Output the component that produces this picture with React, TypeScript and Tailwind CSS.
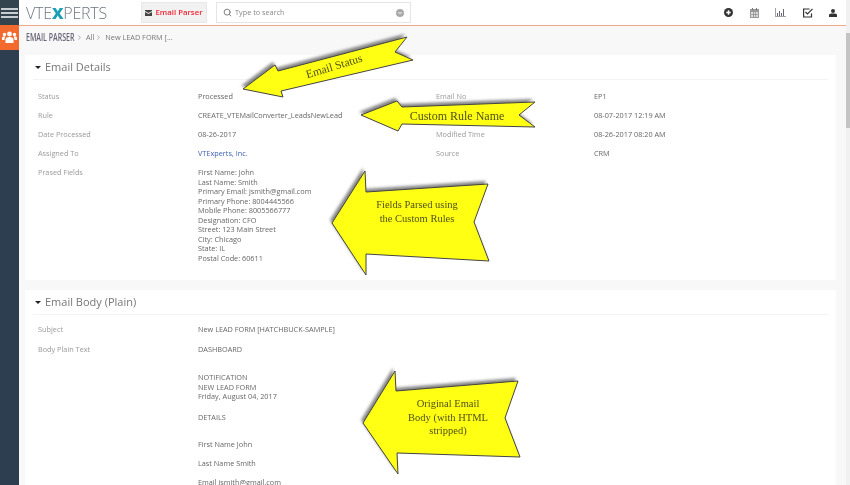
import { ChevronRight, ChevronDown, Search } from "lucide-react";

const font = "[font-family:'Open_Sans',sans-serif]";

function Row({ a, b, c, d, blue }: { a: string; b: string; c?: string; d?: string; blue?: boolean }) {
  return (
    <div className="flex h-[19px] items-start text-[7.3px] leading-[12px]">
      <div className="w-[160px] text-[#999]">{a}</div>
      <div className={`w-[238px] ${blue ? "text-[#4060b0]" : "text-[#666]"}`}>{b}</div>
      <div className="w-[158px] text-[#999]">{c}</div>
      <div className="text-[#666]">{d}</div>
    </div>
  );
}

function Title({ children }: { children: string }) {
  return (
    <div className="flex h-[25px] items-center gap-[4px] border-b border-[#f3f3f3] pl-[2px] text-[11px] text-[#777]">
      <span className="h-0 w-0 border-x-[3px] border-t-[3px] border-x-transparent border-t-[#222]" />
      {children}
    </div>
  );
}

function Arrow({ points }: { points: string }) {
  return (
    <svg className="pointer-events-none absolute left-0 top-0" width="850" height="485">
      <polygon points={points} fill="#333" opacity="0.6" transform="translate(-2 -3)" className="blur-[1.5px]" />
      <polygon points={points} fill="#ffff14" stroke="#444" strokeWidth="1" />
    </svg>
  );
}

function Label({ className, children }: { className: string; children: React.ReactNode }) {
  return (
    <div className={`absolute text-center [font-family:'Liberation_Serif',serif] text-[#50501a] ${className}`}>
      {children}
    </div>
  );
}

export default function App() {
  const parsed = [
    "First Name: John",
    "Last Name: Smith",
    "Primary Email: jsmith@gmail.com",
    "Primary Phone: 8004445566",
    "Mobile Phone: 8005566777",
    "Designation: CFO",
    "Street: 123 Main Street",
    "City: Chicago",
    "State: IL",
    "Postal Code: 60611",
  ];
  return (
    <div className={`relative flex h-[485px] w-[850px] overflow-hidden bg-[#f8f8f8] blur-[0.35px] ${font}`}>
      <aside className="w-[19px] shrink-0 bg-[#2c3e50]">
        <div className="flex h-[25px] flex-col justify-center gap-[2px] bg-[#34444f] px-[1px]">
          <span className="h-[2px] bg-[#c8cdd0]" />
          <span className="h-[2px] bg-[#c8cdd0]" />
          <span className="h-[2px] bg-[#c8cdd0]" />
        </div>
        <div className="flex h-[25px] items-center justify-center bg-[#f26a2e]">
          <svg width="15" height="13" viewBox="0 0 15 13" fill="#fff">
            <circle cx="7.5" cy="3" r="2.4" />
            <circle cx="2.5" cy="3.5" r="1.7" />
            <circle cx="12.5" cy="3.5" r="1.7" />
            <path d="M3.5 12V8.5C3.5 7 5 6 7.5 6s4 1 4 2.5V12z" />
            <path d="M0 9V7c0-1 1-1.700 2.500-1.700l1 .5C2.800 6.500 2.500 7.500 2.500 9zM15 9V7c0-1-1-1.700-2.500-1.700l-1 .5c.7.7 1 1.700 1 3.200z" />
          </svg>
        </div>
      </aside>
      <div className="flex min-w-0 flex-1 flex-col">
        <header className="flex h-[26px] shrink-0 items-center border-b border-[#f0a987] bg-white">
          <div className="ml-[7px] flex w-[115px] items-center text-[16px] font-light tracking-[-0.2px] text-[#6b7880]">
            VTE<span className="font-extrabold text-[#1a9fb5]">X</span>PERTS
          </div>
          <div className="flex h-[21px] w-[66px] items-center justify-center gap-[3px] border border-[#e8e8e8] bg-[#f1f1f1] text-[7.8px] font-semibold text-[#f01f2f]">
            <svg width="7" height="6" viewBox="0 0 7 6" fill="#444"><path d="M0 0h7v1L3.500 3 0 1zM0 2l3.500 2L7 2v4H0z" /></svg>
            Email Parser
          </div>
          <div className="ml-[9px] flex h-[21px] w-[195px] items-center border border-[#e5e5e5] pl-[6px] pr-[6px] text-[7.3px] text-[#888]">
            <Search size={9} strokeWidth={2.500} className="mr-[3px] text-[#777]" />
            <span className="flex-1">Type to search</span>
            <span className="flex h-[8px] w-[8px] items-center justify-center rounded-full bg-[#aaa]">
              <ChevronDown size={6} strokeWidth={4} className="text-white" />
            </span>
          </div>
          <div className="ml-auto mr-[9px] flex w-[113px] items-center justify-between">
            <svg width="9" height="9" viewBox="0 0 9 9"><circle cx="4.500" cy="4.500" r="4.500" fill="#333" /><path d="M4.500 2.300v4.400M2.300 4.500h4.400" stroke="#fff" strokeWidth="1.500" /></svg>
            <svg width="9" height="10" viewBox="0 0 9 10" fill="#777"><path d="M0 1h9v9H0z" opacity=".75" /><path d="M2 0h1v2H2zM6 0h1v2H6z" /><path d="M1 4h7v5H1z" fill="#ddd" /><path d="M1 6h7v.6H1zM3 4h.6v5H3zM5.500 4h.6v5h-.6z" /></svg>
            <svg width="11" height="9" viewBox="0 0 11 9" fill="#667"><path d="M0 0h1v8h10v1H0z" opacity=".6" /><path d="M2 5h1v3H2zM4 3h1v5H4zM6 5h1v3H6zM8 1h1v7H8z" /></svg>
            <svg width="10" height="10" viewBox="0 0 10 10" fill="none" stroke="#333" strokeWidth="1.200"><path d="M8.500 5.500V9H.6V1h6" /><path d="M2.500 4l2 2L9.500.8" /></svg>
            <svg width="8" height="8" viewBox="0 0 8 8" fill="#333"><circle cx="4" cy="2" r="2" /><path d="M0 8V6c0-1 1-1.500 4-1.500S8 5 8 6v2z" /></svg>
          </div>
        </header>
        <main className="min-h-0 flex-1 overflow-hidden pl-[6px] pr-[10px]">
          <div className="flex h-[29px] items-center pl-[1px] pb-[6px] text-[7.3px] text-[#777]">
            <span className="inline-block w-[50px] shrink-0 origin-left scale-x-[0.7] whitespace-nowrap text-[10px] font-semibold text-[#667]">EMAIL PARSER</span>
            <ChevronRight size={7} className="mr-[3px] shrink-0" />
            All
            <ChevronRight size={7} className="ml-[0.5px] mr-[3.5px] shrink-0" />
            New LEAD FORM [...
          </div>
          <section className="h-[225px] bg-white px-[8px]">
            <Title>Email Details</Title>
            <div className="pl-[5px] pt-[10px]">
              <Row a="Status" b="Processed" c="Email No" d="EP1" />
              <Row a="Rule" b="CREATE_VTEMailConverter_LeadsNewLead" c="" d="08-07-2017 12:19 AM" />
              <Row a="Date Processed" b="08-26-2017" c="Modified Time" d="08-26-2017 08:20 AM" />
              <Row a="Assigned To" b="VTExperts, Inc." c="Source" d="CRM" blue />
              <div className="flex text-[7.3px] leading-[9.560px]">
                <div className="w-[160px] pt-[2px] text-[#999]">Prased Fields</div>
                <div className="pt-[2px] text-[#666]">
                  {parsed.map((l) => (
                    <div key={l} className="h-[9.560px]">{l}</div>
                  ))}
                </div>
              </div>
            </div>
          </section>
          <section className="mt-[10px] h-[300px] bg-white px-[8px]">
            <Title>Email Body (Plain)</Title>
            <div className="pl-[5px] pt-[8px] text-[7.3px] leading-[12px]">
              <div className="mb-[1px]">
                <Row a="Subject" b="New LEAD FORM [HATCHBUCK-SAMPLE]" />
              </div>
              <div className="flex text-[#666]">
                <div className="w-[160px] text-[#999]">Body Plain Text</div>
                <div>
                  <div className="h-[30px]">DASHBOARD</div>
                  <div className="leading-[9.500px]">NOTIFICATION</div>
                  <div className="leading-[9.500px]">NEW LEAD FORM</div>
                  <div className="h-[19px] leading-[9.500px]">Friday, August 04, 2017</div>
                  <div className="h-[27px]">DETAILS</div>
                  <div className="h-[19px]">First Name John</div>
                  <div className="h-[19px]">Last Name Smith</div>
                  <div>Email jsmith@gmail.com</div>
                </div>
              </div>
            </div>
          </section>
        </main>
      </div>
      <div className="flex w-[4px] shrink-0 flex-col bg-[#f1f1f1] pt-[33px]">
        <div className="h-[95px] bg-[#c4c4c4]" />
      </div>

      <Arrow points="243,89 275,65 278,71 407,37 395,52 413,60 281,91 283,97" />
      <Arrow points="361,115 397,101 402,107 535,102 519,115 535,127 402,124 398,131" />
      <Arrow points="332,223 365,171 366,192 488,184 474,222 489,261 366,254 366,275" />
      <Arrow points="363,423 395,371 396,391 518,381 505,418 520,457 397,453 398,474" />
      <Label className="left-[289px] top-[59px] w-[90px] -rotate-[17deg] text-[11.500px] leading-[14px]">Email Status</Label>
      <Label className="left-[402px] top-[109px] w-[110px] text-[12px] leading-[14px]">Custom Rule Name</Label>
      <Label className="left-[362px] top-[198px] w-[110px] text-[10.500px] leading-[13.500px]">
        <div>Fields Parsed using</div>
        <div>the Custom Rules</div>
      </Label>
      <Label className="left-[393px] top-[397px] w-[110px] text-[10.500px] leading-[13.500px]">
        <div>Original Email</div>
        <div>Body (with HTML</div>
        <div>stripped)</div>
      </Label>
    </div>
  );
}
